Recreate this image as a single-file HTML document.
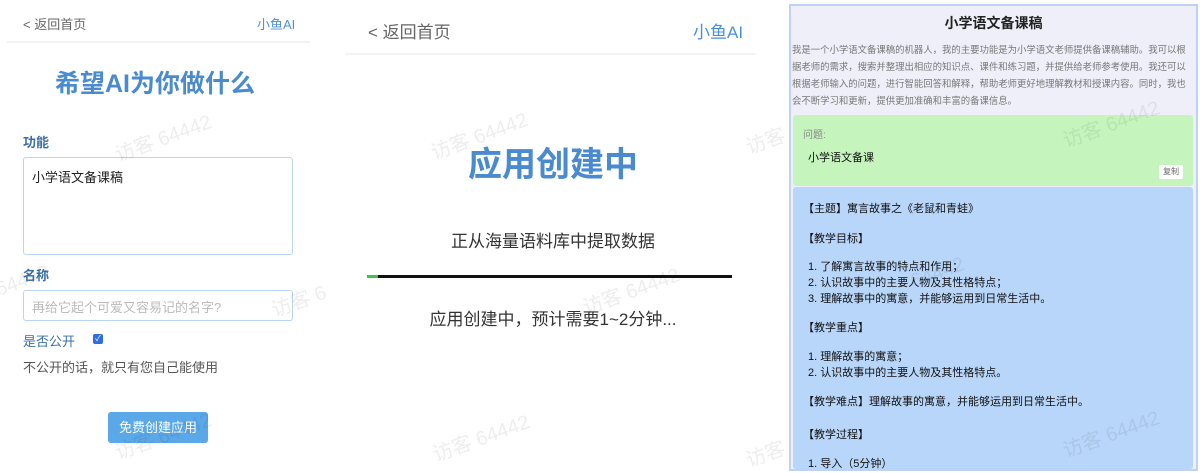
<!DOCTYPE html>
<html><head><meta charset="utf-8"><style>
*{margin:0;padding:0;box-sizing:border-box}
body{width:1200px;height:472px;background:#fff;position:relative;overflow:hidden;font-family:"Liberation Sans","Noto Sans CJK SC",sans-serif}
.a{position:absolute;white-space:nowrap}
.wm{position:absolute;color:rgba(0,0,0,0.07);font-size:20px;transform:rotate(-20deg);white-space:nowrap}
.r{font-size:11px;color:#111;position:absolute;left:803px;white-space:nowrap}
</style></head><body>
<!-- left -->
<div class="a" style="left:23px;top:14px;font-size:13px;color:#666">&lt; 返回首页</div>
<div class="a" style="left:257px;top:14px;font-size:13px;color:#4a90d9">小鱼AI</div>
<div class="a" style="left:7px;top:41px;width:303px;height:2px;background:#f2f2f2"></div>
<div class="a" style="left:0;top:64px;width:310px;text-align:center;font-size:25px;font-weight:bold;color:#4a8bd0">希望AI为你做什么</div>
<div class="a" style="left:23px;top:132px;font-size:13px;font-weight:bold;color:#3a6ea8">功能</div>
<div class="a" style="left:23px;top:157px;width:270px;height:98px;border:1px solid #b9d4f5;border-radius:3px"></div>
<div class="a" style="left:32px;top:167px;font-size:13px;color:#222">小学语文备课稿</div>
<div class="a" style="left:23px;top:265px;font-size:13px;font-weight:bold;color:#3a6ea8">名称</div>
<div class="a" style="left:23px;top:290px;width:270px;height:31px;border:1px solid #b9d4f5;border-radius:3px"></div>
<div class="a" style="left:32px;top:297px;font-size:13px;color:#bbb">再给它起个可爱又容易记的名字?</div>
<div class="a" style="left:23px;top:331px;font-size:13px;color:#3a6ea8">是否公开</div>
<div class="a" style="left:93px;top:334px;width:10px;height:10px;background:#2d6ee0;border-radius:2px;color:#fff;font-size:8px;line-height:10px;text-align:center">✓</div>
<div class="a" style="left:23px;top:357px;font-size:13px;color:#555">不公开的话，就只有您自己能使用</div>
<div class="a" style="left:108px;top:412px;width:100px;height:31px;background:#5aa8e8;border-radius:3px;color:#fff;font-size:13px;line-height:31px;text-align:center">免费创建应用</div>
<!-- middle -->
<div class="a" style="left:368px;top:18px;font-size:17px;color:#666">&lt; 返回首页</div>
<div class="a" style="left:693px;top:18px;font-size:17px;color:#4a90d9">小鱼AI</div>
<div class="a" style="left:345px;top:53px;width:410px;height:2px;background:#f3f3f3"></div>
<div class="a" style="left:340px;top:137px;width:420px;text-align:center;font-size:34px;font-weight:bold;color:#4a8bd0;padding-left:6px">应用创建中</div>
<div class="a" style="left:340px;top:227px;width:420px;text-align:center;font-size:17px;color:#333;padding-left:6px">正从海量语料库中提取数据</div>
<div class="a" style="left:378px;top:275px;width:354px;height:3px;background:#111"></div>
<div class="a" style="left:367px;top:275px;width:11px;height:3px;background:#3ec24a"></div>
<div class="a" style="left:340px;top:305px;width:420px;text-align:center;font-size:17px;color:#333;padding-left:6px">应用创建中，预计需要1~2分钟...</div>
<!-- right -->
<div class="a" style="left:789px;top:4px;width:409px;height:467px;border:2px solid #bfd2f6;background:#efeffa"></div>
<div class="a" style="left:791px;top:13px;width:405px;text-align:center;font-size:14px;font-weight:bold;color:#222">小学语文备课稿</div>
<div class="a" style="left:792px;top:41px;font-size:9.4px;line-height:17px;color:#777">我是一个小学语文备课稿的机器人，我的主要功能是为小学语文老师提供备课稿辅助。我可以根<br>据老师的需求，搜索并整理出相应的知识点、课件和练习题，并提供给老师参考使用。我还可以<br>根据老师输入的问题，进行智能回答和解释，帮助老师更好地理解教材和授课内容。同时，我也<br>会不断学习和更新，提供更加准确和丰富的备课信息。</div>
<div class="a" style="left:793px;top:115px;width:400px;height:71px;background:#c5f5bd;border-radius:3px"></div>
<div class="a" style="left:803px;top:126px;font-size:10px;color:#888">问题:</div>
<div class="r" style="left:808px;top:149px">小学语文备课</div>
<div class="a" style="left:1159px;top:165px;width:24px;height:14px;background:#fff;border-radius:2px;font-size:8px;color:#666;text-align:center;line-height:14px">复制</div>
<div class="a" style="left:793px;top:187px;width:400px;height:282px;background:#b8d6f9;border-radius:3px"></div>
<div class="r" style="top:200px">【主题】寓言故事之《老鼠和青蛙》</div>
<div class="r" style="top:230px">【教学目标】</div>
<div class="r" style="left:808px;top:258px">1. 了解寓言故事的特点和作用；</div>
<div class="r" style="left:808px;top:274px">2. 认识故事中的主要人物及其性格特点；</div>
<div class="r" style="left:808px;top:290px">3. 理解故事中的寓意，并能够运用到日常生活中。</div>
<div class="r" style="top:319px">【教学重点】</div>
<div class="r" style="left:808px;top:348px">1. 理解故事的寓意；</div>
<div class="r" style="left:808px;top:364px">2. 认识故事中的主要人物及其性格特点。</div>
<div class="r" style="top:393px">【教学难点】理解故事的寓意，并能够运用到日常生活中。</div>
<div class="r" style="top:426px">【教学过程】</div>
<div class="r" style="left:808px;top:455px">1. 导入（5分钟）</div>
<!-- watermarks -->
<div class="wm" style="left:112px;top:122px">访客 64442</div>
<div class="wm" style="left:-5px;top:270px">64442</div>
<div class="wm" style="left:270px;top:285px">访客 6</div>
<div class="wm" style="left:112px;top:420px">访客 64442</div>
<div class="wm" style="left:428px;top:120px">访客 64442</div>
<div class="wm" style="left:580px;top:275px">访客 64442</div>
<div class="wm" style="left:430px;top:422px">访客 64442</div>
<div class="wm" style="left:745px;top:125px">访客</div>
<div class="wm" style="left:745px;top:438px">访客</div>
<div class="wm" style="left:1060px;top:108px">访客 64442</div>
<div class="wm" style="left:1060px;top:418px">访客 64442</div>
<div class="wm" style="left:910px;top:262px">64442</div>
</body></html>
